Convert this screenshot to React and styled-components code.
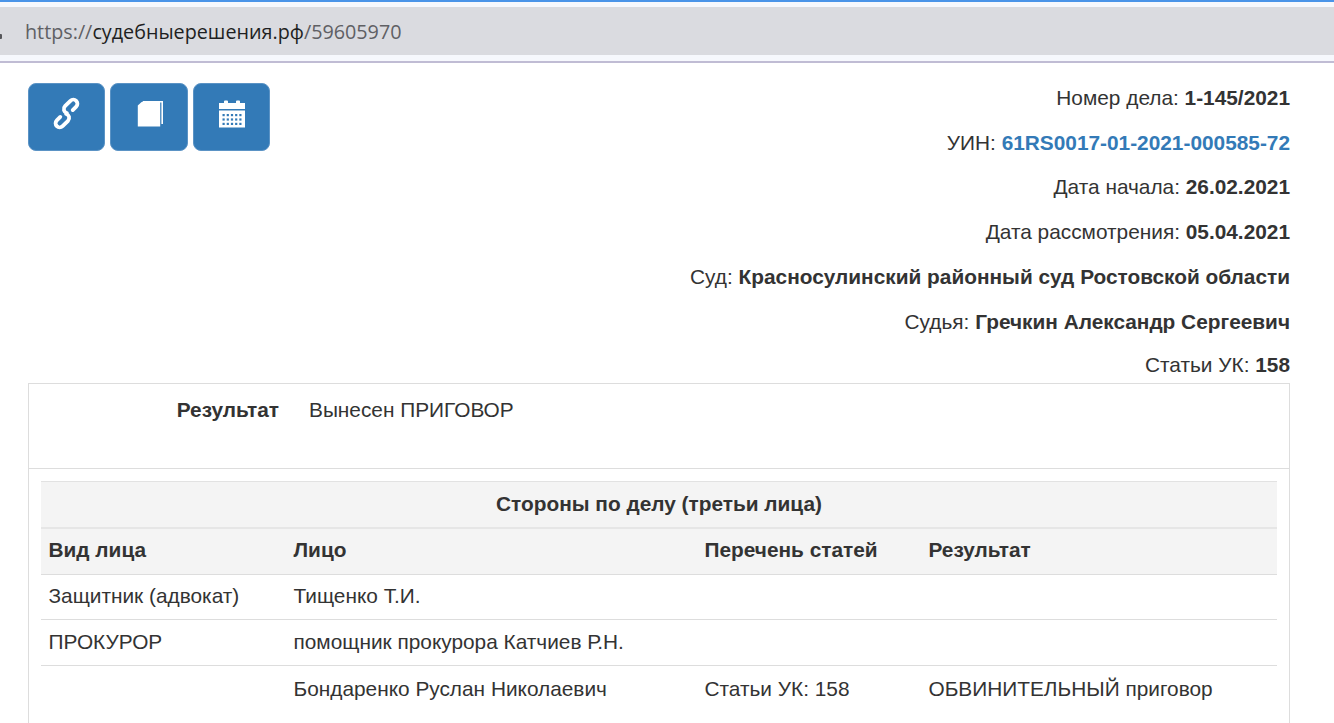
import React from "react";
import styled, { createGlobalStyle } from "styled-components";

const Global = createGlobalStyle`
  html, body { margin: 0; padding: 0; background: #fff; height: 723px; overflow: hidden; }
  body { font-family: "Liberation Sans", Arial, sans-serif; color: #333; font-size: 20.83px; }
  * { box-sizing: border-box; }
`;

const Chrome = styled.header`
  height: 63px;
  background: #f6f8fd;
  border-top: 2px solid #4a94e8;
  border-bottom: 2px solid #c0bcd4;
  padding-top: 5px;
`;
const AddressBar = styled.div`
  height: 48px;
  background: #dadbe0;
  padding-left: 25px;
  display: flex;
  align-items: center;
  font-family: "Open Sans", "Noto Sans", sans-serif;
  font-size: 19.75px;
  color: #5f6064;
  white-space: nowrap;
  position: relative;
`;
const Dark = styled.span`color: #1e1f22;`;
const Edge = styled.i`
  position: absolute;
  left: -1px;
  top: 27px;
  width: 3px;
  height: 5px;
  background: #55565a;
  border-radius: 1px;
`;

const Page = styled.main`
  padding: 20px 44px 0 28px;
`;
const Top = styled.section`
  display: flex;
  justify-content: space-between;
  align-items: flex-start;
  height: 300px;
`;
const Buttons = styled.div`
  display: flex;
  gap: 5px;
`;
const IconButton = styled.button`
  width: ${p => p.$w}px;
  height: 68px;
  padding: 0 0 7px ${p => p.$pl ?? 0}px;
  background: #337ab7;
  border: 1px solid #5b93c5;
  border-radius: 8px;
  display: flex;
  align-items: center;
  justify-content: center;
  color: #fff;
`;
const Meta = styled.div`
  text-align: right;
  line-height: 21px;
  padding-top: 4px;
`;
const MetaRow = styled.p`
  margin: 0 0 ${p => p.$mb ?? 24}px;
  height: 21px;
  white-space: nowrap;
`;
const Link = styled.a`
  color: #337ab7;
  font-weight: 700;
`;

const Panel = styled.section`
  border: 1px solid #ddd;
  border-bottom: 0;
  height: 340px;
`;
const ResultRow = styled.div`
  height: 85px;
  border-bottom: 1px solid #ddd;
  display: grid;
  grid-template-columns: 250px 1fr;
  column-gap: 30px;
  padding-top: 15px;
  line-height: 21px;
`;
const ResultLabel = styled.strong`
  text-align: right;
`;
const TableWrap = styled.div`
  padding: 12px 12px 0;
`;
const Table = styled.table`
  width: 1236px;
  table-layout: fixed;
  border-collapse: separate;
  border-spacing: 0;
  line-height: 21px;
`;
const TitleCell = styled.th`
  height: 46px;
  padding: 0 0 3px;
  background: #f4f4f4;
  border-top: 1px solid #e2e2e2;
  text-align: center;
  font-weight: 700;
`;
const HeadCell = styled.th`
  height: 48px;
  background: #f4f4f4;
  border-top: 2px solid #e6e6e6;
  border-bottom: 1px solid #ddd;
  padding: 0 8px 4px 7.5px;
  text-align: left;
  font-weight: 700;
`;
const Cell = styled.td`
  height: ${p => p.$h ?? 46}px;
  padding: 0 8px ${p => p.$pb ?? 2}px 7.5px;
  border-bottom: ${p => (p.$last ? "0" : "1px solid #ddd")};
  white-space: nowrap;
`;

const linkLoop = "M-1 3.75 H3.5 a3.75 3.75 0 0 0 0 -7.5 H-3.5 a3.75 3.75 0 0 0 -3.2 5.6";
const LinkIcon = () => (
  <svg width="33" height="35" viewBox="-15 -16 30 32" fill="none" stroke="#fff" strokeWidth="3.5" strokeLinecap="round" strokeLinejoin="round">
    <path d={linkLoop} transform="translate(3.75 -6.5) rotate(-45)" />
    <path d={linkLoop} transform="translate(-3.75 6.5) rotate(135)" />
  </svg>
);
const BookIcon = () => (
  <svg width="27" height="28" viewBox="0 0 27 28">
    <path d="M6 1 H26 V24 H24.4 V2.6 H5 Z" fill="#fff" />
    <path d="M.8 5.6 L4.6 2 H23.2 V26.6 H.8 Z" fill="#fff" />
  </svg>
);
const dots = [];
for (let r = 0; r < 3; r++) for (let c = 0; c < 5; c++) dots.push([3.5 + c * 4.2, 14 + r * 4.4]);
const CalendarIcon = () => (
  <svg width="26" height="28" viewBox="0 0 26 28">
    <path d="M0 3 H5 V1.4 Q5 .4 6 .4 H8 Q9 .4 9 1.4 V3 H17 V1.4 Q17 .4 18 .4 H20 Q21 .4 21 1.4 V3 H26 V9 H0 Z" fill="#fff" />
    <rect x="0" y="10.5" width="26" height="17" fill="#fff" />
    {dots.map(([x, y]) => <rect key={`${x}-${y}`} x={x} y={y} width="2.2" height="2.2" fill="#337ab7" />)}
  </svg>
);

export default function App() {
  return (
    <>
      <Global />
      <Chrome>
        <AddressBar>
          <Edge />
          <span>https://<Dark>судебныерешения.рф</Dark>/59605970</span>
        </AddressBar>
      </Chrome>
      <Page>
        <Top>
          <Buttons>
            <IconButton $w={77}><LinkIcon /></IconButton>
            <IconButton $w={78} $pl={2}><BookIcon /></IconButton>
            <IconButton $w={77}><CalendarIcon /></IconButton>
          </Buttons>
          <Meta>
            <MetaRow>Номер дела: <b>1-145/2021</b></MetaRow>
            <MetaRow $mb={23}>УИН: <Link>61RS0017-01-2021-000585-72</Link></MetaRow>
            <MetaRow>Дата начала: <b>26.02.2021</b></MetaRow>
            <MetaRow>Дата рассмотрения: <b>05.04.2021</b></MetaRow>
            <MetaRow>Суд: <b>Красносулинский районный суд Ростовской области</b></MetaRow>
            <MetaRow $mb={22}>Судья: <b>Гречкин Александр Сергеевич</b></MetaRow>
            <MetaRow>Статьи УК: <b>158</b></MetaRow>
          </Meta>
        </Top>
        <Panel>
          <ResultRow>
            <ResultLabel>Результат</ResultLabel>
            <span>Вынесен ПРИГОВОР</span>
          </ResultRow>
          <TableWrap>
            <Table>
              <colgroup>
                <col style={{ width: 245 }} />
                <col style={{ width: 411 }} />
                <col style={{ width: 224 }} />
                <col />
              </colgroup>
              <thead>
                <tr><TitleCell colSpan={4}>Стороны по делу (третьи лица)</TitleCell></tr>
                <tr>
                  <HeadCell>Вид лица</HeadCell>
                  <HeadCell>Лицо</HeadCell>
                  <HeadCell>Перечень статей</HeadCell>
                  <HeadCell>Результат</HeadCell>
                </tr>
              </thead>
              <tbody>
                <tr><Cell $h={45} $pb={4}>Защитник (адвокат)</Cell><Cell $h={45} $pb={4}>Тищенко Т.И.</Cell><Cell $h={45} /><Cell $h={45} /></tr>
                <tr><Cell>ПРОКУРОР</Cell><Cell>помощник прокурора Катчиев Р.Н.</Cell><Cell /><Cell /></tr>
                <tr><Cell $last /><Cell $last>Бондаренко Руслан Николаевич</Cell><Cell $last>Статьи УК: 158</Cell><Cell $last>ОБВИНИТЕЛЬНЫЙ приговор</Cell></tr>
              </tbody>
            </Table>
          </TableWrap>
        </Panel>
      </Page>
    </>
  );
}
